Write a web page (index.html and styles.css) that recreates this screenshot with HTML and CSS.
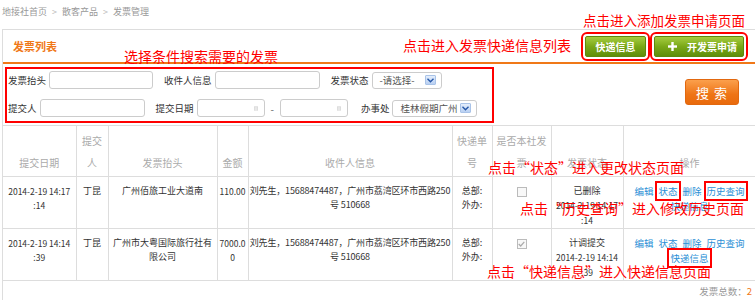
FILE: index.html
```html
<!DOCTYPE html>
<html lang="zh-CN">
<head>
<meta charset="UTF-8">
<title>发票管理</title>
<link rel="stylesheet" href="styles.css">
</head>
<body>

<div class="crumb">地接社首页<span class="sep">&gt;</span>散客产品<span class="sep">&gt;</span>发票管理</div>

<div class="panel">
  <div class="panel-head">
    <h2 class="title">发票列表</h2>
    <div class="head-btns">
      <a href="#" class="btn-green btn-express">快递信息</a>
      <a href="#" class="btn-green btn-add">
        <svg class="plus" width="9" height="9" viewBox="0 0 9 9"><rect x="3.3" y="0" width="2.4" height="9" fill="#fff"/><rect x="0" y="3.3" width="9" height="2.4" fill="#fff"/></svg>
        开发票申请
      </a>
    </div>
  </div>

  <form class="search">
    <div class="fields">
      <div class="row">
        <span class="lbl">发票抬头</span>
        <input type="text" class="txt w104">
        <span class="lbl">收件人信息</span>
        <input type="text" class="txt w105">
        <span class="lbl">发票状态</span>
        <span class="select w70">
          <span class="sel-text">-请选择-</span>
          <span class="arrow"><svg width="7" height="5" viewBox="0 0 7 5"><path d="M0.5 0.8 L3.5 3.8 L6.5 0.8" stroke="#2557a8" stroke-width="1.4" fill="none"/></svg></span>
        </span>
      </div>
      <div class="row">
        <span class="lbl">提交人</span>
        <input type="text" class="txt w105">
        <span class="lbl">提交日期</span>
        <span class="date">
          <input type="text">
          <svg class="cal" width="7" height="7" viewBox="0 0 7 7"><rect x="0" y="0" width="7" height="7" fill="#ccc"/><path d="M0 2.5H7M0 4.7H7M2.3 1V7M4.7 1V7" stroke="#fff" stroke-width="0.8"/></svg>
        </span>
        <span class="dash">-</span>
        <span class="date">
          <input type="text">
          <svg class="cal" width="7" height="7" viewBox="0 0 7 7"><rect x="0" y="0" width="7" height="7" fill="#ccc"/><path d="M0 2.5H7M0 4.7H7M2.3 1V7M4.7 1V7" stroke="#fff" stroke-width="0.8"/></svg>
        </span>
        <span class="lbl office">办事处</span>
        <span class="select w85">
          <span class="sel-text wide">桂林假期广州</span>
          <span class="arrow"><svg width="7" height="5" viewBox="0 0 7 5"><path d="M0.5 0.8 L3.5 3.8 L6.5 0.8" stroke="#2557a8" stroke-width="1.4" fill="none"/></svg></span>
        </span>
      </div>
    </div>
    <button type="submit" class="btn-search">搜 索</button>
  </form>

  <table class="list">
    <colgroup>
      <col style="width:73px"><col style="width:32px"><col style="width:109px"><col style="width:31px">
      <col style="width:204px"><col style="width:40px"><col style="width:59px"><col style="width:72px"><col style="width:133px">
    </colgroup>
    <thead>
      <tr>
        <th>提交日期</th>
        <th>提交人</th>
        <th>发票抬头</th>
        <th>金额</th>
        <th>收件人信息</th>
        <th>快递单号</th>
        <th>是否本社发票</th>
        <th>发票状态</th>
        <th>操作</th>
      </tr>
    </thead>
    <tbody>
      <tr>
        <td class="num">2014-2-19 14:17<br>:14</td>
        <td>丁昆</td>
        <td>广州佰旅工业大道南</td>
        <td class="num money">110.00</td>
        <td class="addr">刘先生，15688474487，广州市荔湾区环市西路250<br>号 510668</td>
        <td>总部:<br>外办:</td>
        <td><span class="chk"></span></td>
        <td>已删除<br><span class="num">2014-2-19 14:17<br>:14</span></td>
        <td class="ops">
          <a href="#">编辑</a><a href="#" class="mark">状态</a><a href="#">删除</a><a href="#" class="mark">历史查询</a><br>
          <a href="#">快递信息</a>
        </td>
      </tr>
      <tr>
        <td class="num">2014-2-19 14:14<br>:39</td>
        <td>丁昆</td>
        <td>广州市大粤国际旅行社有限公司</td>
        <td class="num money">7000.00</td>
        <td class="addr">刘先生，15688474487，广州市荔湾区环市西路250<br>号 510668</td>
        <td>总部:<br>外办:</td>
        <td><span class="chk checked"><svg width="7" height="6" viewBox="0 0 7 6"><path d="M0.7 3 L2.7 5 L6.3 0.8" stroke="#aaa" stroke-width="1.2" fill="none"/></svg></span></td>
        <td>计调提交<br><span class="num">2014-2-19 14:14<br>:39</span></td>
        <td class="ops">
          <a href="#">编辑</a><a href="#">状态</a><a href="#">删除</a><a href="#">历史查询</a><br>
          <a href="#" class="mark">快递信息</a>
        </td>
      </tr>
    </tbody>
  </table>

  <div class="total">发票总数：<em>2</em></div>
</div>

<div class="note note-add">点击进入添加发票申请页面</div>
<div class="note note-express">点击进入发票快递信息列表</div>
<div class="note note-search">选择条件搜索需要的发票</div>
<div class="note note-status">点击“状态”进入更改状态页面</div>
<div class="note note-history">点击“历史查询”进入修改历史页面</div>
<div class="note note-kuaidi">点击“快递信息”进入快递信息页面</div>

</body>
</html>
```

FILE: styles.css
```css
body {
  margin: 0;
  width: 755px;
  height: 300px;
  overflow: hidden;
  position: relative;
  font-family: "Noto Sans CJK SC", "Liberation Sans", sans-serif;
  font-size: 9px;
  color: #333;
  background: #fff;
}

.crumb {
  height: 24px;
  line-height: 24px;
  padding-left: 2px;
  margin-bottom: 5px;
  color: #999;
  font-size: 9px;
}

.crumb .sep {
  margin: 0 5px;
  color: #bbb;
}

.panel {
  margin-left: 2px;
  width: 753px;
  padding-bottom: 20px;
  border: 1px solid #ddd;
}

.panel-head {
  height: 32px;
  padding: 0 12px 0 10px;
  border-bottom: 2px solid #f07818;
  display: flex;
  align-items: center;
  justify-content: space-between;
}

.title {
  margin: 0;
  font-size: 11px;
  font-weight: bold;
  color: #f07818;
}

.head-btns {
  display: flex;
  gap: 8px;
}

.btn-green {
  height: 21px;
  box-sizing: border-box;
  display: inline-flex;
  align-items: center;
  justify-content: center;
  border: 1px solid #5d8a0d;
  border-radius: 2px;
  background: linear-gradient(#a6cd40, #7aa818 50%, #5f8e0a);
  color: #fff;
  font-size: 10px;
  font-weight: bold;
  text-decoration: none;
  outline: 2px solid #f00;
  outline-offset: 2px;
}

.btn-express {
  width: 61px;
}

.btn-add {
  width: 90px;
  justify-content: flex-start;
  padding-left: 13px;
}

.btn-add .plus {
  margin-right: 10px;
}

/* search form */
.search {
  display: flex;
  justify-content: space-between;
  align-items: flex-start;
  padding: 3px 17px 2px 2px;
}

.fields {
  width: 489px;
  box-sizing: border-box;
  border: 2px solid #f00;
  padding: 2px 0 4px 1px;
}

.row {
  height: 18px;
  display: flex;
  align-items: center;
}

.row + .row {
  margin-top: 10px;
}

.lbl {
  font-size: 9.5px;
  margin-right: 3px;
  white-space: nowrap;
}

.lbl.office {
  margin-right: 2px;
}

.txt {
  height: 18px;
  box-sizing: border-box;
  border: 1px solid #ccc;
  border-radius: 3px;
  padding: 0 3px;
  margin: 0 11px 0 0;
  font: inherit;
}

.w104 { width: 104px; }
.w105 { width: 105px; }
.w70 { width: 70px; }
.w85 { width: 85px; }

.date {
  width: 68px;
  height: 18px;
  box-sizing: border-box;
  border: 1px solid #ccc;
  border-radius: 3px;
  display: inline-flex;
  align-items: center;
}

.date input {
  border: none;
  outline: none;
  width: 50px;
  padding: 0 3px;
  font: inherit;
  background: transparent;
}

.date .cal {
  margin-left: auto;
  margin-right: 6px;
}

.dash {
  margin: 0 6px;
  color: #666;
  font-size: 10px;
}

.dash + .date {
  margin-right: 13px;
}

.select {
  height: 17px;
  box-sizing: border-box;
  border: 1px solid #ccc;
  border-radius: 3px;
  display: inline-flex;
  align-items: center;
  overflow: hidden;
}

.sel-text {
  flex: 1;
  min-width: 0;
  overflow: hidden;
  white-space: nowrap;
  padding-left: 7px;
  font-size: 9.5px;
  color: #555;
}

.sel-text.wide {
  padding-left: 8px;
  margin-right: -3px;
}

.arrow {
  width: 11px;
  height: 10px;
  box-sizing: border-box;
  margin-right: 5px;
  border: 1px solid #a9c3e8;
  border-radius: 1px;
  background: linear-gradient(#e4eefc, #b9d0f2);
  display: inline-flex;
  align-items: center;
  justify-content: center;
}

.btn-search {
  width: 54px;
  height: 26px;
  margin-top: 12px;
  border: 1px solid #e2680f;
  border-radius: 3px;
  background: linear-gradient(#fba04c, #ee7416 60%, #e96a0c);
  color: #fff;
  font-family: inherit;
  font-size: 13px;
  letter-spacing: 1px;
  padding: 0;
}

/* list */
.list {
  width: 753px;
  table-layout: fixed;
  border-collapse: collapse;
}

.list th,
.list td {
  border: 1px solid #ddd;
  text-align: center;
  padding: 0 2px;
  overflow: hidden;
}

.list tr > :first-child {
  border-left: none;
}

.list th {
  height: 48px;
  vertical-align: bottom;
  padding-bottom: 2px;
  line-height: 22px;
  font-size: 10px;
  font-weight: normal;
  color: #aaa;
}

.list td {
  height: 43px;
  vertical-align: top;
  padding-top: 7px;
  line-height: 14px;
}

.list .num {
  font-size: 8.5px;
}

.list .money {
  word-break: break-all;
  padding: 7px 1px 0;
}

.list .addr {
  white-space: nowrap;
  padding: 7px 0 0;
  letter-spacing: -0.15px;
}

.chk {
  display: inline-flex;
  align-items: center;
  justify-content: center;
  width: 10px;
  height: 10px;
  box-sizing: border-box;
  margin-top: 3px;
  border: 1px solid #bbb;
  background: #f8f8f8;
  vertical-align: top;
}

.ops a {
  margin: 0 2.5px;
  font-size: 9.5px;
  color: #2b8fd6;
  text-decoration: none;
}

.ops a.mark {
  outline: 2px solid #f00;
  outline-offset: 1px;
}

.total {
  padding: 3px 4px 0 0;
  text-align: right;
  line-height: 14px;
  font-size: 9.5px;
  color: #999;
}

.total em {
  font-style: normal;
  color: #f07818;
}

/* annotations */
.note {
  position: absolute;
  color: #f00;
  font-size: 14px;
  line-height: 16px;
  white-space: nowrap;
}

.note-add { left: 583px; top: 12px; font-size: 13.5px; }
.note-express { left: 403px; top: 37px; }
.note-search { left: 124px; top: 48px; }
.note-status { left: 488px; top: 159px; }
.note-history { left: 520px; top: 200px; }
.note-kuaidi { left: 487px; top: 263px; }
```
